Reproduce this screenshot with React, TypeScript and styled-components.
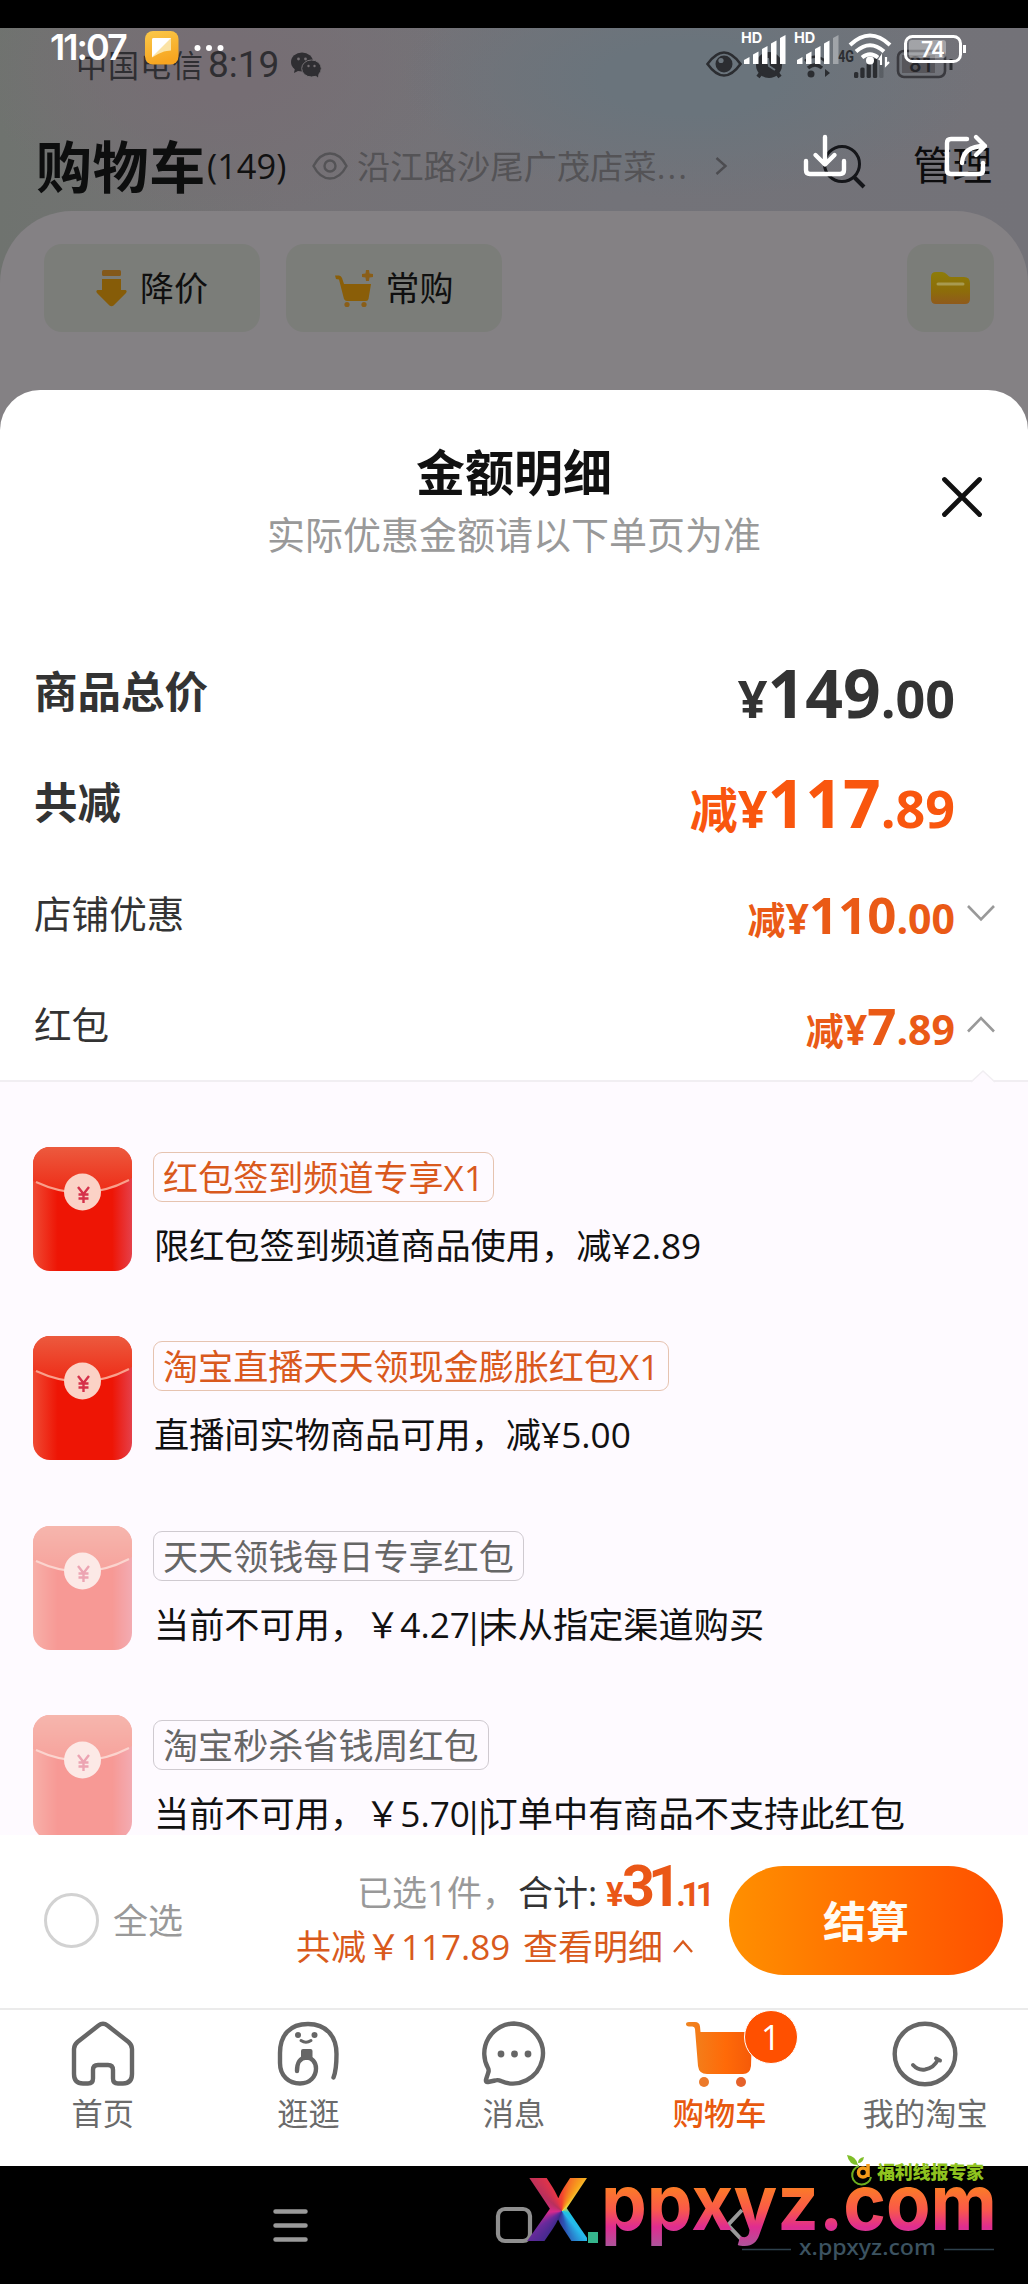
import React from "react";
import styled, { createGlobalStyle, css } from "styled-components";

const Global = createGlobalStyle`
  html, body { margin: 0; padding: 0; background: #000; }
  * { box-sizing: border-box; }
  svg { display: block; flex: none; overflow: visible; }
`;

const textFont = `"Open Sans", "Noto Sans CJK SC", sans-serif`;
const numFont = `"Roboto", "Noto Sans CJK SC", sans-serif`;

const Page = styled.div`
  position: relative;
  width: 1028px;
  height: 2284px;
  display: flex;
  flex-direction: column;
  overflow: hidden;
  background: #000;
  font-family: ${textFont};
  color: #111;
  white-space: nowrap;
`;

const TopStrip = styled.div`
  height: 28px;
  flex: none;
  background: #000;
`;

/* ---------- dimmed cart page behind the sheet ---------- */

const Backdrop = styled.div`
  height: 422px;
  flex: none;
  display: flex;
  flex-direction: column;
  background:
    radial-gradient(ellipse 290px 120px at 690px 50px, #6a747c 0 30%, rgba(106, 116, 124, 0) 100%),
    radial-gradient(ellipse 240px 150px at 220px 40px, #766e74 0 20%, rgba(118, 110, 116, 0) 100%),
    linear-gradient(90deg, #6f736f 0, #757276 28%, #737379 60%, #737278 100%);
`;

const DimStatus = styled.div`
  height: 72px;
  padding: 2px 0 0 76px;
  display: flex;
  align-items: center;
  color: #2f2e32;
`;

const Carrier = styled.span`
  width: 132px;
  font-size: 31px;
  line-height: 40px;
  letter-spacing: 1px;
`;

const DimClock = styled.span`
  width: 83px;
  font-family: ${numFont};
  font-size: 37px;
  line-height: 40px;
`;

const DimIcons = styled.div`
  margin-left: 385px;
  display: flex;
  align-items: center;
`;

const TitleRow = styled.div`
  height: 111px;
  padding: 21px 36px 0 36px;
  display: flex;
  align-items: center;
`;

const PageTitle = styled.h1`
  margin: 0;
  width: 171px;
  font-size: 56px;
  line-height: 70px;
  letter-spacing: 0.6px;
  font-weight: 700;
  color: #0d0e0e;
`;

const Count = styled.span`
  width: 105px;
  font-size: 34.4px;
  line-height: 48px;
  color: #111;
`;

const Address = styled.span`
  margin-left: 9px;
  width: 358px;
  font-size: 33.3px;
  line-height: 48px;
  color: #545356;
`;

const Ellipsis = styled.span`
  letter-spacing: 2px;
`;

const Manage = styled.span`
  margin-left: auto;
  font-size: 39.6px;
  line-height: 52px;
  padding-bottom: 2px;
  color: #0c0c0d;
`;

const Card = styled.div`
  flex: 1;
  padding: 33px 34px 0 44px;
  border-radius: 72px 72px 0 0;
  display: flex;
  align-items: flex-start;
  gap: 26px;
  background: #848184;
`;

const Chip = styled.div<{ $small?: boolean }>`
  width: ${(p) => (p.$small ? 87 : 216)}px;
  height: 88px;
  margin-left: ${(p) => (p.$small ? "auto" : "0")};
  border-radius: 18px;
  display: flex;
  align-items: center;
  justify-content: center;
  gap: 13px;
  background: #7b7d79;
  font-size: 34px;
  line-height: 48px;
  color: #0f0f0f;
`;

/* ---------- floating viewer overlay ---------- */

const Overlay = styled.div`
  position: absolute;
  top: 28px;
  left: 0;
  width: 1028px;
  height: 160px;
  color: #fff;
`;

const OverlayStatus = styled.div`
  height: 40px;
  padding: 0 62px 0 50px;
  display: flex;
  align-items: center;
`;

const OverlayClock = styled.span`
  width: 95px;
  padding-bottom: 2px;
  font-family: "Inter", sans-serif;
  font-weight: 600;
  font-size: 36px;
  line-height: 40px;
  letter-spacing: -2px;
`;

const OverlayRight = styled.div`
  margin-left: auto;
  padding-bottom: 1px;
  display: flex;
`;

const OverlayActions = styled.div`
  padding: 65px 39px 0 802px;
  display: flex;
  justify-content: space-between;
`;

/* ---------- sheet ---------- */

const Sheet = styled.section`
  flex: none;
  height: 1445px;
  margin-top: -60px;
  border-radius: 40px 40px 0 0;
  display: flex;
  flex-direction: column;
  overflow: hidden;
  background: #fff;
`;

const SheetHead = styled.header`
  position: relative;
  height: 246px;
  flex: none;
  padding-top: 50px;
  display: flex;
  flex-direction: column;
  align-items: center;
`;

const SheetTitle = styled.h2`
  margin: 0;
  font-size: 49px;
  line-height: 64px;
  font-weight: 700;
  color: #111;
`;

const SheetNote = styled.p`
  margin: 5px 0 0;
  font-size: 38px;
  line-height: 50px;
  color: #999;
`;

const CloseButton = styled.button`
  position: absolute;
  right: 46px;
  top: 87px;
  padding: 0;
  border: 0;
  background: none;
`;

const Row = styled.div`
  height: 111px;
  flex: none;
  padding-left: 34px;
  display: flex;
  align-items: center;
`;

const RowLabel = styled.span<{ $strong?: boolean }>`
  flex: 1;
  font-size: ${(p) => (p.$strong ? 43.5 : 37.6)}px;
  font-weight: ${(p) => (p.$strong ? 700 : 400)};
  line-height: 60px;
  color: #333;
`;

const Price = styled.span<{ $big?: boolean; $accent?: boolean }>`
  padding-top: 6px;
  display: flex;
  align-items: baseline;
  font-weight: 700;
  line-height: 66px;
  color: ${(p) => (p.$accent ? (p.$big ? "#f9560e" : "#ea5a16") : "#333")};
  --small: ${(p) => (p.$big ? 52 : 41)}px;
  --large: ${(p) => (p.$big ? 66 : 51)}px;
  --word: ${(p) => (p.$big ? 48 : 38)}px;
`;

const PriceWord = styled.span`
  font-size: var(--word);
`;
const PriceSmall = styled.span`
  font-size: var(--small);
`;
const PriceLarge = styled.span`
  font-size: var(--large);
`;

const ChevronSlot = styled.span`
  width: 73px;
  padding-left: 12px;
`;

const Coupons = styled.div`
  position: relative;
  flex: 1;
  min-height: 0;
  padding: 65px 33px 0;
  display: flex;
  flex-direction: column;
  gap: 65.3px;
  border-top: 2px solid #f1eef2;
  background: #fefaff;
`;

const Pointer = styled.svg`
  position: absolute;
  right: 33px;
  top: -12px;
`;

const Coupon = styled.article`
  height: 124px;
  flex: none;
  display: flex;
  gap: 21px;
`;

const CouponBody = styled.div`
  padding-top: 5px;
  display: flex;
  flex-direction: column;
  align-items: flex-start;
`;

const Tag = styled.span<{ $off?: boolean }>`
  height: 50px;
  padding: 0 9px 0 9px;
  border: 1px solid ${(p) => (p.$off ? "#cfcad0" : "#e6c3b0")};
  border-radius: 9px;
  font-size: 35.1px;
  line-height: 48px;
  color: ${(p) => (p.$off ? "#666" : "#d9591d")};
`;

const CouponText = styled.span`
  margin-top: 20px;
  padding-left: 1px;
  font-size: 35.2px;
  line-height: 46px;
  color: #111;
`;

const Bars = styled.span`
  margin-left: -6px;
  letter-spacing: -10px;
`;

/* ---------- checkout bar ---------- */

const Checkout = styled.footer`
  height: 173px;
  flex: none;
  padding: 0 25px 2px 44px;
  display: flex;
  align-items: center;
  background: #fff;
`;

const Radio = styled.span`
  width: 55px;
  height: 55px;
  border: 3px solid #d2d2d2;
  border-radius: 50%;
`;

const SelectAll = styled.span`
  margin-left: 14px;
  font-size: 35px;
  line-height: 48px;
  color: #999;
`;

const Summary = styled.div`
  margin-left: auto;
  width: 433px;
  padding-bottom: 5px;
  display: flex;
  flex-direction: column;
  gap: 6px;
`;

const Line = styled.div<{ $left: number }>`
  height: 52px;
  padding-left: ${(p) => p.$left}px;
  display: flex;
  align-items: baseline;
  font-size: 35px;
  line-height: 52px;
`;

const Muted = styled.span`
  width: 161px;
  color: #999;
`;
const TotalLabel = styled.span`
  width: 88px;
  color: #333;
`;
const Orange = styled.span<{ $w?: number }>`
  width: ${(p) => (p.$w ? p.$w + "px" : "auto")};
  color: #d95a1c;
`;

const TotalPrice = styled.span`
  font-family: ${numFont};
  font-weight: 700;
  font-size: 33px;
  line-height: 46px;
  letter-spacing: -2px;
  color: #ea5717;
`;
const TotalBig = styled.span`
  font-size: 58px;
  letter-spacing: -7px;
`;
const TotalCents = styled.span`
  letter-spacing: -4.5px;
  margin-left: 2px;
`;

const Caret = styled.svg`
  align-self: center;
`;

const PayButton = styled.button`
  width: 274px;
  height: 109px;
  padding: 0 0 2px;
  border: 0;
  border-radius: 55px;
  background: linear-gradient(90deg, #ff9000, #ff7200 45%, #ff5000);
  font-family: ${textFont};
  font-size: 43px;
  font-weight: 700;
  color: #fffbf3;
`;

/* ---------- tab bar ---------- */

const Tabs = styled.nav`
  height: 158px;
  flex: none;
  display: grid;
  grid-template-columns: repeat(5, 1fr);
  border-top: 2px solid #ebebeb;
  background: #fff;
`;

const Tab = styled.div<{ $active?: boolean }>`
  position: relative;
  padding-top: 11px;
  display: flex;
  flex-direction: column;
  align-items: center;
  font-size: 31.2px;
  line-height: 44px;
  gap: 4px;
  ${(p) =>
    p.$active
      ? css`
          color: #e8590f;
          font-weight: 500;
        `
      : css`
          color: #6b6b6b;
        `}
`;

const Badge = styled.span`
  position: absolute;
  left: 127px;
  top: 0;
  width: 54px;
  height: 54px;
  border: 1.5px solid #fff;
  border-radius: 50%;
  display: flex;
  align-items: center;
  justify-content: center;
  background: #ff5000;
  font-size: 34px;
  line-height: 50px;
  font-weight: 400;
  color: #fff;
`;

/* ---------- system navigation and logo ---------- */

const SystemNav = styled.div`
  flex: 1;
  padding: 41px 0 0 273px;
  display: flex;
  align-items: flex-start;
  background: #000;
`;

const NavGap = styled.span<{ $w: number }>`
  width: ${(p) => p.$w}px;
`;

const Logo = styled.div`
  position: absolute;
  left: 500px;
  top: 2150px;
  width: 528px;
  height: 134px;
`;

const LogoX = styled.span`
  position: absolute;
  left: 25px;
  top: 14px;
  width: 62px;
  height: 92px;
  font-family: "Inter", sans-serif;
  font-weight: 800;
  font-size: 87px;
  line-height: 92px;
  letter-spacing: -2px;
  color: transparent;
  background: conic-gradient(
    from 0deg at 37px 47px,
    #f4442e 0deg,
    #f7a21c 32deg,
    #f3d03e 45deg,
    #1cc6e0 110deg,
    #27b9ec 140deg,
    #2b55b4 170deg,
    #3d2a8c 205deg,
    #6a2a9c 235deg,
    #d92a8c 265deg,
    #b9305c 310deg,
    #e0344a 335deg,
    #f4442e 360deg
  );
  background-clip: text;
  -webkit-background-clip: text;
`;

function Yen({ color }: { color: string }) {
  return (
    <path d="M45 40 50.5 47 56 40M50.5 47V56M45.5 47.5H55.5M45.5 51.5H55.5" fill="none" stroke={color} strokeWidth="2.4" />
  );
}

function Envelope({ id, off }: { id: string; off?: boolean }) {
  return (
    <svg width="99" height="124" viewBox="0 0 99 124" opacity={off ? 0.42 : 1}>
      <defs>
        <linearGradient id={id + "b"} x1="0" x2="1" y1="0" y2="0">
          <stop offset="0" stopColor="#ef4a33" />
          <stop offset="0.25" stopColor="#ee1505" />
          <stop offset="0.8" stopColor="#ee1505" />
          <stop offset="1" stopColor="#e5404a" />
        </linearGradient>
        <linearGradient id={id + "f"} x1="0" x2="0" y1="0" y2="1">
          <stop offset="0" stopColor="#ec5a3e" />
          <stop offset="1" stopColor="#ee2c17" />
        </linearGradient>
      </defs>
      <rect width="99" height="124" rx="17" fill={`url(#${id}b)`} />
      <path d="M0 34V17A17 17 0 0 1 17 0H82A17 17 0 0 1 99 17V31Q50 56 0 34Z" fill={`url(#${id}f)`} />
      <path d="M3 35Q50 57 96 33" fill="none" stroke="#f9a08c" strokeWidth="2" />
      <circle cx="49.500" cy="45" r="18.500" fill="#fbd2c6" />
      <Yen color="#d5304a" />
    </svg>
  );
}

function Chevron({ up }: { up?: boolean }) {
  return (
    <svg width="28" height="17" viewBox="0 0 28 17">
      <path d={up ? "M1 15.500 14 2 27 15.500" : "M1 1 14 14.500 27 1"} fill="none" stroke="#999" strokeWidth="2.600" />
    </svg>
  );
}

function Signal({ faint }: { faint?: boolean }) {
  return (
    <svg width="53" height="34" viewBox="0 0 53 34">
      <text x="-1" y="12" fontFamily="Inter" fontWeight="700" fontSize="14.500" fill="#fff">
        HD
      </text>
      {[0, 1, 2, 3, 4].map((i) => (
        <path
          key={i}
          d={`M${2 + i * 9} ${33}V${29 - i * 5.5}l5.500-3V33Z`}
          fill="#fff"
          opacity={faint && i === 4 ? 0.35 : 1}
        />
      ))}
    </svg>
  );
}

const tabColor = "#666";

function HomeIcon() {
  return (
    <svg width="64" height="66" viewBox="0 0 64 66">
      <path
        d="M27.500 4.500Q32 .8 36.500 4.500L57.500 21Q61 24 61 28V53Q61 62.500 52 62.500H47Q42 62.500 42 57.500V49Q42 44 37 44H27Q22 44 22 49V57.500Q22 62.500 17 62.500H12Q3 62.500 3 53V28Q3 24 6.500 21Z"
        fill="none"
        stroke={tabColor}
        strokeWidth="4.400"
      />
    </svg>
  );
}

function StrollIcon() {
  return (
    <svg width="62" height="66" viewBox="0 0 62 66">
      <path
        d="M56.500 56.500Q59.500 49 59.500 33C59.500 15 49 3 31 3S3 14 3 32V42C3 55 12 62.500 23 62.500C33 62.500 39 55.500 39 47.500C39 41 34.500 36.500 29.500 36.500C23 36.500 20 42 20 50"
        fill="none"
        stroke={tabColor}
        strokeWidth="4.400"
        strokeLinecap="round"
      />
      <circle cx="21" cy="14" r="3" fill={tabColor} />
      <circle cx="37.500" cy="14" r="3" fill={tabColor} />
      <path d="M24 19.500Q29 23 34 19.500" fill="none" stroke={tabColor} strokeWidth="3" strokeLinecap="round" />
      <rect x="24" y="28" width="11.500" height="11" rx="2" fill={tabColor} />
    </svg>
  );
}

function ChatIcon() {
  return (
    <svg width="66" height="66" viewBox="0 0 66 66">
      <path
        d="M33 2.500A30 30 0 1 1 20 60Q17 58.500 14 59.500L7 61Q4.500 61.500 5 58.500L7.500 51Q8 49 7 47A30 30 0 0 1 33 2.500Z"
        fill="none"
        stroke={tabColor}
        strokeWidth="4.400"
      />
      {[20, 33.5, 47].map((x) => (
        <circle key={x} cx={x} cy="33" r="3.400" fill={tabColor} />
      ))}
    </svg>
  );
}

function CartIcon() {
  return (
    <svg width="68" height="66" viewBox="0 0 68 66">
      <defs>
        <linearGradient id="cartFill" x1="0" x2="1" y1="0" y2="0">
          <stop offset="0" stopColor="#ef8420" />
          <stop offset="0.6" stopColor="#ff6a08" />
          <stop offset="1" stopColor="#f55a08" />
        </linearGradient>
      </defs>
      <path
        d="M3 1H9Q13.500 1 14 5.500L14.500 11H66L65 45Q64 53 57 53H21Q13 53 12 45L9 8Q8.700 5.500 6.500 5.500H3Q0 5 0 3T3 1Z"
        fill="url(#cartFill)"
      />
      <circle cx="18" cy="61" r="5" fill="#ec7a2a" />
      <circle cx="55" cy="61" r="5" fill="#e5622a" />
    </svg>
  );
}

function MeIcon() {
  return (
    <svg width="66" height="66" viewBox="0 0 66 66">
      <circle cx="33" cy="33" r="30.300" fill="none" stroke={tabColor} strokeWidth="4.400" />
      <path d="M21 44Q26 49.500 33 48.500Q42 47 46 38.500M44 37.500 48 39.500" fill="none" stroke={tabColor} strokeWidth="4" strokeLinecap="round" />
    </svg>
  );
}

const coupons = [
  { tag: "红包签到频道专享X1", text: "限红包签到频道商品使用，减¥2.89" },
  { tag: "淘宝直播天天领现金膨胀红包X1", text: "直播间实物商品可用，减¥5.00" },
  { tag: "天天领钱每日专享红包", text: "当前不可用，￥4.27", reason: "未从指定渠道购买", off: true },
  { tag: "淘宝秒杀省钱周红包", text: "当前不可用，￥5.70", reason: "订单中有商品不支持此红包", off: true },
];

const rows = [
  { label: "商品总价", whole: "149", cents: ".00", big: true },
  { label: "共减", word: "减", whole: "117", cents: ".89", big: true },
  { label: "店铺优惠", word: "减", whole: "110", cents: ".00", chevron: "down" },
  { label: "红包", word: "减", whole: "7", cents: ".89", chevron: "up" },
];

export default function App() {
  return (
    <Page>
      <Global />
      <TopStrip />

      <Backdrop>
        <DimStatus>
          <Carrier>中国电信</Carrier>
          <DimClock>8:19</DimClock>
          <svg width="30" height="26" viewBox="0 0 30 26">
            <ellipse cx="11" cy="10" rx="11" ry="9.500" fill="#2f2e32" />
            <path d="M4 16 3 21 9 18Z" fill="#2f2e32" />
            <ellipse cx="20.500" cy="16.500" rx="9.800" ry="8.500" fill="#2f2e32" stroke="#746f73" strokeWidth="1" />
            <path d="M24 23 27 25.500 27.500 21Z" fill="#2f2e32" />
            <circle cx="7.500" cy="7" r="1.400" fill="#746f73" />
            <circle cx="14.500" cy="7" r="1.400" fill="#746f73" />
            <circle cx="17.500" cy="14" r="1.200" fill="#746f73" />
            <circle cx="23.500" cy="14" r="1.200" fill="#746f73" />
          </svg>
          <DimIcons>
            <svg width="250" height="32" viewBox="0 0 250 32">
              <g fill="none" stroke="#2b2d31" strokeWidth="2.600">
                <path d="M1.500 15Q18 -8 34.500 15Q18 38 1.500 15Z" />
                <rect x="192" y="2" width="47" height="26" rx="6" stroke="#3a3a3f" />
                <path d="M99 12Q109 3.500 119 12" />
                <path d="M102 19Q109 13 116 19" strokeWidth="3.500" />
              </g>
              <circle cx="18" cy="15" r="8.500" fill="#2b2d31" />
              <circle cx="15" cy="11.500" r="2.600" fill="#6a747c" />
              <circle cx="63" cy="16" r="13" fill="#2b2d31" />
              <path d="M52 28 55 24M74 28 71 24" stroke="#2b2d31" strokeWidth="4" />
              <path d="M62 9 63 17 69 21" stroke="#6a747c" strokeWidth="2" fill="none" />
              <circle cx="105" cy="25" r="3.500" fill="#2b2d31" />
              <path d="M119 20V28L124 24Z" fill="#2b2d31" />
              <text x="132" y="13" fontFamily="Roboto" fontWeight="700" fontSize="17" textLength="16" lengthAdjust="spacingAndGlyphs" fill="#2b2d31">
                4G
              </text>
              {[0, 1, 2, 3, 4].map((i) => (
                <rect key={i} x={148 + i * 6.3} y={23 - i * 4.5} width="4.300" height={6 + i * 4.5} rx="1.500" fill="#2b2d31" opacity={i === 4 ? 0.3 : 1} />
              ))}
              <rect x="196" y="6" width="33" height="18" fill="#57565b" />
              <path d="M245 10V21" stroke="#2b2d31" strokeWidth="3" />
              <text x="203" y="23" fontFamily="Roboto" fontWeight="500" fontSize="22" fill="#26262a">
                81
              </text>
            </svg>
          </DimIcons>
        </DimStatus>

        <TitleRow>
          <PageTitle>购物车</PageTitle>
          <Count>(149)</Count>
          <svg width="36" height="28" viewBox="0 0 36 28">
            <path d="M1.500 14Q8 1.500 18 1.500T34.500 14Q28 26.500 18 26.500T1.500 14Z" fill="none" stroke="#545356" strokeWidth="2.400" />
            <circle cx="18" cy="14" r="5.500" fill="none" stroke="#545356" strokeWidth="2.400" />
          </svg>
          <Address>
            沿江路沙尾广茂店菜<Ellipsis>...</Ellipsis>
          </Address>
          <svg width="12" height="18" viewBox="0 0 12 18">
            <path d="M1.500 1 10.500 9 1.500 17" fill="none" stroke="#4c4c50" strokeWidth="2.400" />
          </svg>
          <NavGap $w={96} />
          <svg width="42" height="42" viewBox="0 0 42 42">
            <circle cx="19" cy="19" r="17.500" fill="none" stroke="#15161a" strokeWidth="3" />
            <path d="M31 32 41 42" stroke="#15161a" strokeWidth="4" />
          </svg>
          <Manage>管理</Manage>
        </TitleRow>

        <Card>
          <Chip>
            <svg width="31" height="37" viewBox="0 0 31 37">
              <rect x="6" y="0" width="19" height="6" rx="1.500" fill="#84591a" />
              <path d="M6 9H25V20H29.500Q31.500 21 30 23L17.500 35.500Q15.500 37 13.500 35.500L1 23Q-.5 21 1.500 20H6Z" fill="#865c08" />
            </svg>
            降价
          </Chip>
          <Chip>
            <svg width="38" height="37" viewBox="0 0 38 37">
              <path d="M0 5.500 1 9 4 9.500 9 29Q10 31 12 31H31Q33 31 33.500 29L36 14H9L7 8Q6 5.500 4 5.500Z" fill="#8a5e08" />
              <circle cx="12" cy="34.500" r="2.600" fill="#8a5e18" />
              <circle cx="29" cy="34.500" r="2.600" fill="#8a5e18" />
              <path d="M31 0 34 0 34.500 3.500 38 4V7L34.500 7.500 34 11H31L30.500 7.500 27 7V4L30.500 3.500Z" fill="#8a5e18" />
            </svg>
            常购
          </Chip>
          <Chip $small>
            <svg width="39" height="32" viewBox="0 0 39 32">
              <defs>
                <linearGradient id="folder" x1="0" x2="0" y1="0" y2="1">
                  <stop offset="0" stopColor="#8d7c08" />
                  <stop offset="0.6" stopColor="#8d6c0a" />
                  <stop offset="1" stopColor="#8f5a1c" />
                </linearGradient>
              </defs>
              <path d="M0 5Q0 0 5 0H11Q14 0 16 2.500T20 5H33Q39 5 39 11V27Q39 32 34 32H5Q0 32 0 27Z" fill="url(#folder)" />
              <path d="M7 12H32" stroke="#a89a50" strokeWidth="3" strokeLinecap="round" />
            </svg>
          </Chip>
        </Card>
      </Backdrop>

      <Overlay>
        <OverlayStatus>
          <OverlayClock>11:07</OverlayClock>
          <svg width="80" height="34" viewBox="0 0 80 34">
            <defs>
              <linearGradient id="note" x1="0" x2="0.3" y1="0" y2="1">
                <stop offset="0" stopColor="#fbc94a" />
                <stop offset="1" stopColor="#f7a520" />
              </linearGradient>
            </defs>
            <rect width="33.500" height="33.500" rx="8" fill="url(#note)" />
            <path d="M7 8.500Q7 7 8.500 7H26V19.500Q21 20 19 20.500Q12 23 7 26.500Z" fill="#fbe3a5" />
            <path d="M7 8.500Q7 7 8.500 7H26L7 26Z" fill="#fff" />
            {[52.5, 64, 75.5].map((x) => (
              <circle key={x} cx={x} cy="17" r="3" fill="#fff" />
            ))}
          </svg>
          <OverlayRight>
            <Signal />
            <Signal faint />
            <svg width="56" height="34" viewBox="0 0 56 34">
              <g fill="none" stroke="#fff" strokeWidth="4">
                <path d="M2 14Q22 -5 42 14" />
                <path d="M8 20.500Q22 8 36 20.500" />
                <path d="M14 26.500Q22 20 30 26.500" />
              </g>
              <circle cx="22" cy="29.500" r="4" fill="#fff" />
              <path d="M33 34V26L31 29M38 26V34L41 31" stroke="#fff" strokeWidth="2.200" fill="none" />
            </svg>
            <svg width="62" height="34" viewBox="0 0 62 34">
              <rect x="1.500" y="5.500" width="55" height="25" rx="7" fill="none" stroke="#fff" strokeWidth="3" />
              <rect x="5" y="9" width="37" height="18" rx="3" fill="#fff" opacity="0.35" />
              <path d="M60.500 14V22" stroke="#fff" strokeWidth="3" />
              <text x="28.500" y="26" textAnchor="middle" fontFamily="Inter" fontWeight="600" fontSize="21" letterSpacing="-1" fill="#fff">
                74
              </text>
            </svg>
          </OverlayRight>
        </OverlayStatus>
        <OverlayActions>
          <svg width="46" height="46" viewBox="0 0 46 46">
            <path d="M4 28V37Q4 41 8 41H38Q42 41 42 37V28M23 4V30M13.500 22 23 31.500 32.500 22" fill="none" stroke="#fff" strokeWidth="4.400" strokeLinecap="round" strokeLinejoin="round" />
          </svg>
          <svg width="46" height="46" viewBox="0 0 46 46">
            <path d="M24 6H8Q4 6 4 10V37Q4 41 8 41H36Q40 41 40 37V30M19 30Q20 13 42 13M33 4 42 13 33 22" fill="none" stroke="#fff" strokeWidth="4.400" strokeLinecap="round" strokeLinejoin="round" />
          </svg>
        </OverlayActions>
      </Overlay>

      <Sheet>
        <SheetHead>
          <SheetTitle>金额明细</SheetTitle>
          <SheetNote>实际优惠金额请以下单页为准</SheetNote>
          <CloseButton aria-label="关闭">
            <svg width="40" height="40" viewBox="0 0 40 40">
              <path d="M2.500 2.500 37.500 37.500M37.500 2.500 2.500 37.500" stroke="#111" strokeWidth="4.800" strokeLinecap="round" />
            </svg>
          </CloseButton>
        </SheetHead>
        {rows.map((r) => (
          <Row key={r.label}>
            <RowLabel $strong={r.big}>{r.label}</RowLabel>
            <Price $big={r.big} $accent={!!r.word}>
              {r.word && <PriceWord>{r.word}</PriceWord>}
              <PriceSmall>¥</PriceSmall>
              <PriceLarge>{r.whole}</PriceLarge>
              <PriceSmall>{r.cents}</PriceSmall>
            </Price>
            <ChevronSlot>{r.chevron && <Chevron up={r.chevron === "up"} />}</ChevronSlot>
          </Row>
        ))}
        <Coupons>
          <Pointer width="24" height="13" viewBox="0 0 24 13">
            <path d="M0 13 12 1 24 13Z" fill="#fefaff" />
            <path d="M0 12 12 1 24 12" fill="none" stroke="#f1eef2" strokeWidth="1.500" />
          </Pointer>
          {coupons.map((c, i) => (
            <Coupon key={c.tag}>
              <Envelope id={"env" + i} off={c.off} />
              <CouponBody>
                <Tag $off={c.off}>{c.tag}</Tag>
                <CouponText>
                  {c.text}
                  {c.reason && <Bars>||</Bars>}
                  {c.reason}
                </CouponText>
              </CouponBody>
            </Coupon>
          ))}
        </Coupons>
      </Sheet>

      <Checkout>
        <Radio />
        <SelectAll>全选</SelectAll>
        <Summary>
          <Line $left={61}>
            <Muted>已选1件，</Muted>
            <TotalLabel>合计:</TotalLabel>
            <TotalPrice>
              ¥<TotalBig>31</TotalBig>
              <TotalCents>.11</TotalCents>
            </TotalPrice>
          </Line>
          <Line $left={0}>
            <Orange $w={227}>共减￥117.89</Orange>
            <Orange $w={150}>查看明细</Orange>
            <Caret width="20" height="14" viewBox="0 0 20 14">
              <path d="M1 12 10 1.500 19 12" fill="none" stroke="#d95a1c" strokeWidth="2.400" />
            </Caret>
          </Line>
        </Summary>
        <PayButton>结算</PayButton>
      </Checkout>

      <Tabs>
        <Tab>
          <HomeIcon />
          首页
        </Tab>
        <Tab>
          <StrollIcon />
          逛逛
        </Tab>
        <Tab>
          <ChatIcon />
          消息
        </Tab>
        <Tab $active>
          <CartIcon />
          购物车
          <Badge>1</Badge>
        </Tab>
        <Tab>
          <MeIcon />
          我的淘宝
        </Tab>
      </Tabs>

      <SystemNav>
        <svg width="35" height="36" viewBox="0 0 35 36">
          <path d="M2.500 4.500H32.500M2.500 18.500H32.500M2.500 32.500H32.500" stroke="#9a9a9a" strokeWidth="4.500" strokeLinecap="round" />
        </svg>
        <NavGap $w={188} />
        <svg width="36" height="36" viewBox="0 0 36 36">
          <rect x="2" y="2" width="32" height="32" rx="7" fill="none" stroke="#8f8f8f" strokeWidth="4.200" />
        </svg>
        <NavGap $w={194} />
        <svg width="18" height="36" viewBox="0 0 18 36">
          <path d="M16 3 2 18 16 33" fill="none" stroke="#9a9a9a" strokeWidth="4" />
        </svg>
      </SystemNav>

      <Logo>
        <LogoX>X</LogoX>
        <svg width="528" height="134" viewBox="0 0 528 134">
          <defs>
            <linearGradient id="word" gradientUnits="userSpaceOnUse" x1="0" x2="0" y1="38" y2="98">
              <stop offset="0" stopColor="#fb7a28" />
              <stop offset="0.35" stopColor="#fa5a48" />
              <stop offset="0.65" stopColor="#e02c90" />
              <stop offset="1" stopColor="#a8589c" />
            </linearGradient>
          </defs>
          <rect x="88" y="82" width="10" height="11" fill="#35b58c" />
          <text x="101" y="80" fontFamily="Inter" fontWeight="700" fontSize="77" textLength="396" lengthAdjust="spacingAndGlyphs" fill="url(#word)">
            ppxyz.com
          </text>
          <text x="299" y="105" fontFamily="Noto Sans" fontWeight="500" fontSize="21.500" textLength="137" lengthAdjust="spacingAndGlyphs" fill="#3c5361">
            x.ppxyz.com
          </text>
          <path d="M242 99.500H291M444 99.500H494" stroke="#2e414d" strokeWidth="1.500" />
          <path d="M347 5Q356 6 358 15Q349 15 347 5Z" fill="#7fbf28" />
          <path d="M358 13Q358 8 364 7Q363 13 358 13Z" fill="#7fbf28" />
          <path d="M359 16A9.500 9.500 0 1 0 371 27" fill="none" stroke="#6cae1e" strokeWidth="2" />
          <circle cx="363" cy="22.500" r="4.500" fill="none" stroke="#f39a1a" strokeWidth="3.500" />
          <path d="M368 14V27" stroke="#f39a1a" strokeWidth="3.500" />
          <text x="377" y="29" fontFamily="Noto Sans CJK SC" fontWeight="900" fontSize="18" textLength="107" fill="#8fc31f">
            福利线报专家
          </text>
        </svg>
      </Logo>
    </Page>
  );
}
